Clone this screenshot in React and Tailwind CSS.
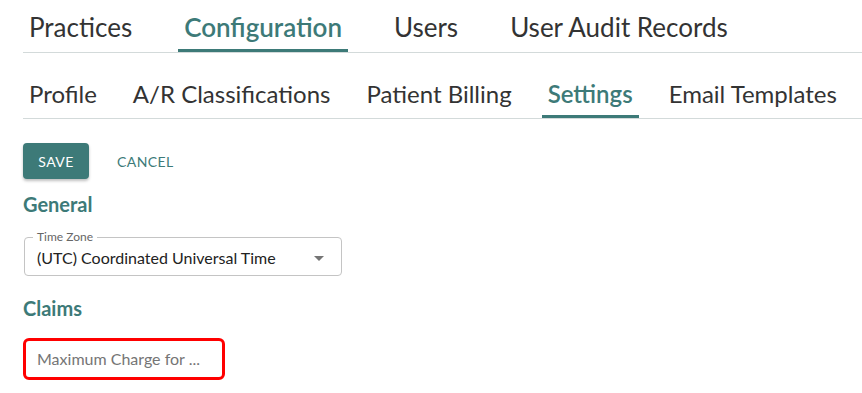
import { useState } from "react";

const TEAL = "text-[#3d7a78]";

function TabRow({ tabs, active, gap, size, className }) {
    return (
        <div className={`flex border-b border-[#d3dada] ${gap} ${className}`}>
            {tabs.map((t) => (
                <div key={t} className={`relative h-[48px] flex items-center px-[6px] ${size} leading-[1.2] ${t === active ? "text-[#3d7a78] font-semibold" : "text-[#333]"}`}>
                    {t}
                    {t === active && <span className="absolute left-0 right-0 bottom-0 h-[3px] bg-[#3d7a78]" />}
                </div>
            ))}
        </div>
    );
}

export default function App() {
    const [value] = useState("(UTC) Coordinated Universal Time");

    return (
        <div className="w-[862px] h-[393px] bg-white overflow-hidden pl-[23px] pt-[4px]" style={{ fontFamily: "Lato, 'Noto Sans', sans-serif" }}>
            <TabRow tabs={["Practices", "Configuration", "Users", "User Audit Records"]} active="Configuration" gap="gap-[40px]" size="text-[26px]" />
            <TabRow tabs={["Profile", "A/R Classifications", "Patient Billing", "Settings", "Email Templates"]} active="Settings" gap="gap-[24px]" size="text-[24px]" className="mt-[17px]" />

            <div className="flex items-center gap-[12px] mt-[24px]">
                <button className="h-[36px] w-[66px] rounded-[4px] bg-[#3d7a78] text-white text-[14px] font-normal tracking-[0.4px] shadow-[0_2px_3px_rgba(0,0,0,0.25)]">SAVE</button>
                <button className={`h-[36px] px-[16px] text-[14px] font-normal tracking-[0.4px] ${TEAL}`}>CANCEL</button>
            </div>

            <h2 className={`mt-[13px] text-[20px] leading-[1.2] font-bold ${TEAL}`}>General</h2>

            <div className="relative mt-[21px] ml-[1px] w-[318px] h-[39px] rounded-[4px] border border-[#c4c4c4] flex items-center pl-[12px] pr-[10px]">
                <span className="absolute -top-[8px] left-[8px] bg-white px-[4px] text-[12px] leading-[14px] text-[#666]">Time Zone</span>
                <span className="flex-1 text-[16px] text-[#222] pt-[3px]">{value}</span>
                <svg width="24" height="24" viewBox="0 0 24 24" className="text-[#757575] mt-[2px]">
                    <path d="M7 10l5 5 5-5z" fill="currentColor" />
                </svg>
            </div>

            <h2 className={`mt-[20px] text-[20px] leading-[1.2] font-bold ${TEAL}`}>Claims</h2>

            <div className="mt-[18px] w-[202px] h-[42px] rounded-[6px] border-[3px] border-[#ff0000] flex items-center pl-[11px]">
                <span className="text-[16px] text-[#757575] truncate">Maximum Charge for ...</span>
            </div>
        </div>
    );
}
